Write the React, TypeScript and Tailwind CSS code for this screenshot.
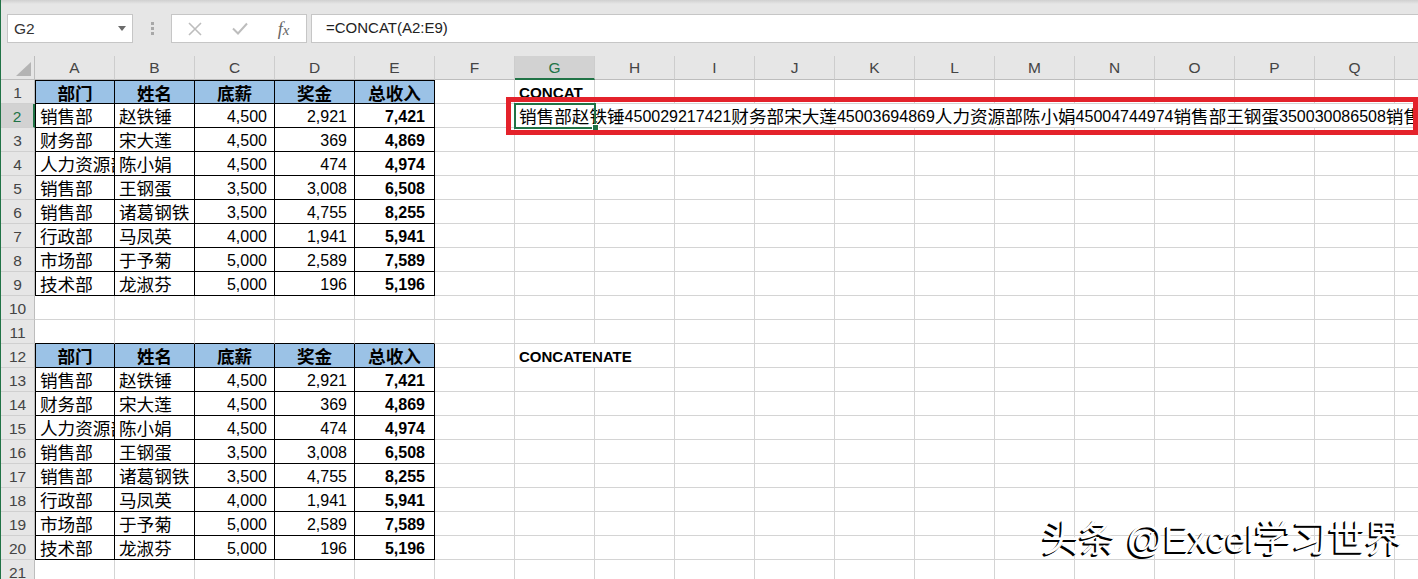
import React from "react";

type Rec = [string, string, number, number, number];
const DATA: Rec[] = [
  ["销售部", "赵铁锤", 4500, 2921, 7421],
  ["财务部", "宋大莲", 4500, 369, 4869],
  ["人力资源部", "陈小娟", 4500, 474, 4974],
  ["销售部", "王钢蛋", 3500, 3008, 6508],
  ["销售部", "诸葛钢铁", 3500, 4755, 8255],
  ["行政部", "马凤英", 4000, 1941, 5941],
  ["市场部", "于予菊", 5000, 2589, 7589],
  ["技术部", "龙淑芬", 5000, 196, 5196],
];
const HEAD = ["部门", "姓名", "底薪", "奖金", "总收入"];
const COLS = "ABCDEFGHIJKLMNOPQR".split("");
const ROWS = Array.from({ length: 21 }, (_, i) => i + 1);

const fmt = (n: number) => n.toLocaleString("en-US");

const CJK = "font-['Noto_Sans_CJK_SC',sans-serif] text-[17.6px]";
const NUM = "font-['Liberation_Sans',sans-serif] text-[16px]";
const BASE =
  "w-[80px] h-full shrink-0 box-border border-r border-b flex items-center overflow-hidden whitespace-nowrap";

function tableIndex(r: number) {
  if (r >= 1 && r <= 9) return r - 1;
  if (r >= 12 && r <= 20) return r - 12;
  return -1;
}

function RowHead({ r }: { r: number }) {
  const sel = r === 2;
  return (
    <div
      className={`w-[34px] h-full shrink-0 box-border border-b border-[#d0d0d0] flex items-center justify-center pt-[2px] font-['Liberation_Sans',sans-serif] text-[15.5px] ${
        sel
          ? "bg-[#d2d2d2] text-[#217346] border-r-2 border-r-[#217346]"
          : "bg-[#e6e6e6] text-[#444444] border-r border-r-[#bdbdbd]"
      }`}
    >
      {r}
    </div>
  );
}

function ConcatText() {
  const segs: { t: string; cjk: boolean }[] = [];
  DATA.forEach((d) => {
    segs.push({ t: d[0] + d[1], cjk: true });
    segs.push({ t: `${d[2]}${d[3]}${d[4]}`, cjk: false });
  });
  return (
    <>
      {segs.map((s, i) => (
        <span key={i} className={s.cjk ? CJK : NUM}>
          {s.t}
        </span>
      ))}
    </>
  );
}

function Row({ r }: { r: number }) {
  const t = tableIndex(r);
  const cells: React.ReactNode[] = [];
  for (let c = 0; c < 18; c++) {
    if (c < 5 && t >= 0) {
      let cls = `${BASE} border-black pt-[2px]`;
      if (c === 0) cls += " border-l";
      if (r === 1) cls += " border-t";
      if (t === 0) {
        cells.push(
          <div key={c} className={`${cls} bg-[#9bc2e6] justify-center`}>
            <span className={`${CJK} font-bold text-black`}>{HEAD[c]}</span>
          </div>
        );
      } else {
        const rec = DATA[t - 1];
        if (c < 2) {
          cells.push(
            <div key={c} className={`${cls} justify-start pl-[4px]`}>
              <span className={`${CJK} text-black`}>{rec[c] as string}</span>
            </div>
          );
        } else {
          cells.push(
            <div
              key={c}
              className={`${cls} justify-end ${c === 4 ? "pr-[9px]" : "pr-[7px]"}`}
            >
              <span className={`${NUM} text-black ${c === 4 ? "font-bold" : ""}`}>
                {fmt(rec[c] as number)}
              </span>
            </div>
          );
        }
      }
      continue;
    }
    if (r === 11 && c < 5) {
      cells.push(<div key={c} className={`${BASE} border-[#d4d4d4] border-b-black`} />);
      continue;
    }
    if (r === 2 && c === 6) {
      cells.push(
        <div
          key={c}
          className="w-[960px] h-full shrink-0 box-border border-b border-[#d4d4d4] flex items-center overflow-hidden whitespace-nowrap pl-[4px] pt-[2px] text-black"
        >
          <ConcatText />
        </div>
      );
      break;
    }
    if (r === 1 && c === 6) {
      cells.push(
        <div key={c} className={`${BASE} border-[#d4d4d4] pl-[4px] pt-[3px]`}>
          <span className="font-['Liberation_Sans',sans-serif] text-[15.2px] font-bold text-black">
            CONCAT
          </span>
        </div>
      );
      continue;
    }
    if (r === 12 && c === 6) {
      cells.push(
        <div
          key={c}
          className="w-[160px] h-full shrink-0 box-border border-r border-b border-[#d4d4d4] flex items-center whitespace-nowrap pl-[4px] pt-[3px]"
        >
          <span className="font-['Liberation_Sans',sans-serif] text-[15px] font-bold text-black">
            CONCATENATE
          </span>
        </div>
      );
      c++;
      continue;
    }
    cells.push(<div key={c} className={`${BASE} border-[#d4d4d4]`} />);
  }
  return (
    <div className="flex h-[24px] shrink-0">
      <RowHead r={r} />
      {cells}
    </div>
  );
}

function ColumnHeader() {
  return (
    <div className="flex h-[24px] shrink-0">
      <div className="w-[34px] h-full shrink-0 box-border border-r border-b border-[#bdbdbd] bg-[#e6e6e6] flex items-end justify-end pr-[3px] pb-[3px]">
        <svg width="15" height="14" viewBox="0 0 15 14">
          <polygon points="15,0 15,14 0,14" fill="#b4b4b4" />
        </svg>
      </div>
      {COLS.map((l) => {
        const sel = l === "G";
        return (
          <div
            key={l}
            className={`w-[80px] h-full shrink-0 box-border border-r border-r-[#cdcdcd] flex items-center justify-center pt-[1px] font-['Liberation_Sans',sans-serif] text-[15.5px] ${
              sel
                ? "bg-[#d2d2d2] text-[#217346] border-b-2 border-b-[#217346]"
                : "bg-[#e6e6e6] text-[#444444] border-b border-b-[#bdbdbd]"
            }`}
          >
            {l}
          </div>
        );
      })}
    </div>
  );
}

function FormulaBar() {
  return (
    <div className="h-[56px] shrink-0 bg-[#e6e6e6] flex flex-col">
      <div className="h-[4px] bg-linear-to-b from-[#d0d0d0] to-[#e6e6e6]" />
      <div className="flex items-start pt-[10px] pl-[6px]">
        <div className="w-[126px] h-[29px] shrink-0 box-border border border-[#c6c6c6] bg-white flex items-center justify-between pl-[6px] pr-[6px]">
          <span className="font-['Liberation_Sans',sans-serif] text-[15.5px] text-[#333333]">G2</span>
          <svg width="8" height="5" viewBox="0 0 8 5">
            <polygon points="0,0 8,0 4,5" fill="#6b6b6b" />
          </svg>
        </div>
        <div className="w-[38px] h-[29px] shrink-0 flex flex-col items-center justify-center gap-[2px]">
          <div className="w-[3px] h-[3px] bg-[#a8a8a8]" />
          <div className="w-[3px] h-[3px] bg-[#a8a8a8]" />
          <div className="w-[3px] h-[3px] bg-[#a8a8a8]" />
        </div>
        <div className="w-[136px] h-[29px] shrink-0 box-border border border-[#c6c6c6] bg-white flex items-center">
          <div className="w-[45px] flex justify-center pl-[2px]">
            <svg width="14" height="14" viewBox="0 0 14 14">
              <path d="M1 1 L13 13 M13 1 L1 13" stroke="#bdbdbd" strokeWidth="1.6" fill="none" />
            </svg>
          </div>
          <div className="w-[45px] flex justify-center pl-[2px]">
            <svg width="16" height="13" viewBox="0 0 16 13">
              <path d="M1 6.5 L6 11.5 L15 1.5" stroke="#bdbdbd" strokeWidth="2" fill="none" />
            </svg>
          </div>
          <div className="w-[45px] flex justify-center">
            <span className="font-['Liberation_Serif',serif] italic text-[18px] text-[#666666] leading-none">
              f<span className="text-[15px]">x</span>
            </span>
          </div>
        </div>
        <div className="ml-[4px] flex-1 h-[29px] box-border border border-r-0 border-[#c6c6c6] bg-white flex items-center pl-[14px]">
          <span className="font-['Liberation_Sans',sans-serif] text-[15px] text-[#222222]">
            =CONCAT(A2:E9)
          </span>
        </div>
      </div>
    </div>
  );
}

export default function App() {
  return (
    <div className="relative w-[1418px] h-[579px] overflow-hidden bg-white border-l border-[#217346] flex flex-col">
      <FormulaBar />
      <div className="flex flex-col">
        <ColumnHeader />
        {ROWS.map((r) => (
          <Row key={r} r={r} />
        ))}
      </div>

      {/* selected cell outline */}
      <div className="absolute left-[513px] top-[103px] w-[82px] h-[26px] box-border border-2 border-[#217346]" />
      <div className="absolute left-[591px] top-[124px] w-[7px] h-[7px] bg-[#217346] border border-white" />

      {/* red annotation box */}
      <div className="absolute left-[505px] top-[97px] w-[912px] h-[38px] box-border border-[5px] border-[#e4222b]" />

      {/* watermark */}
      <div className="absolute left-[1041px] top-[521px] whitespace-nowrap font-['Liberation_Sans','Noto_Sans_CJK_SC',sans-serif] text-[37px] leading-none text-white [text-shadow:-2px_2px_0.5px_#000,-1px_1px_0_#000]">
        头条 @Excel学习世界
      </div>
    </div>
  );
}
